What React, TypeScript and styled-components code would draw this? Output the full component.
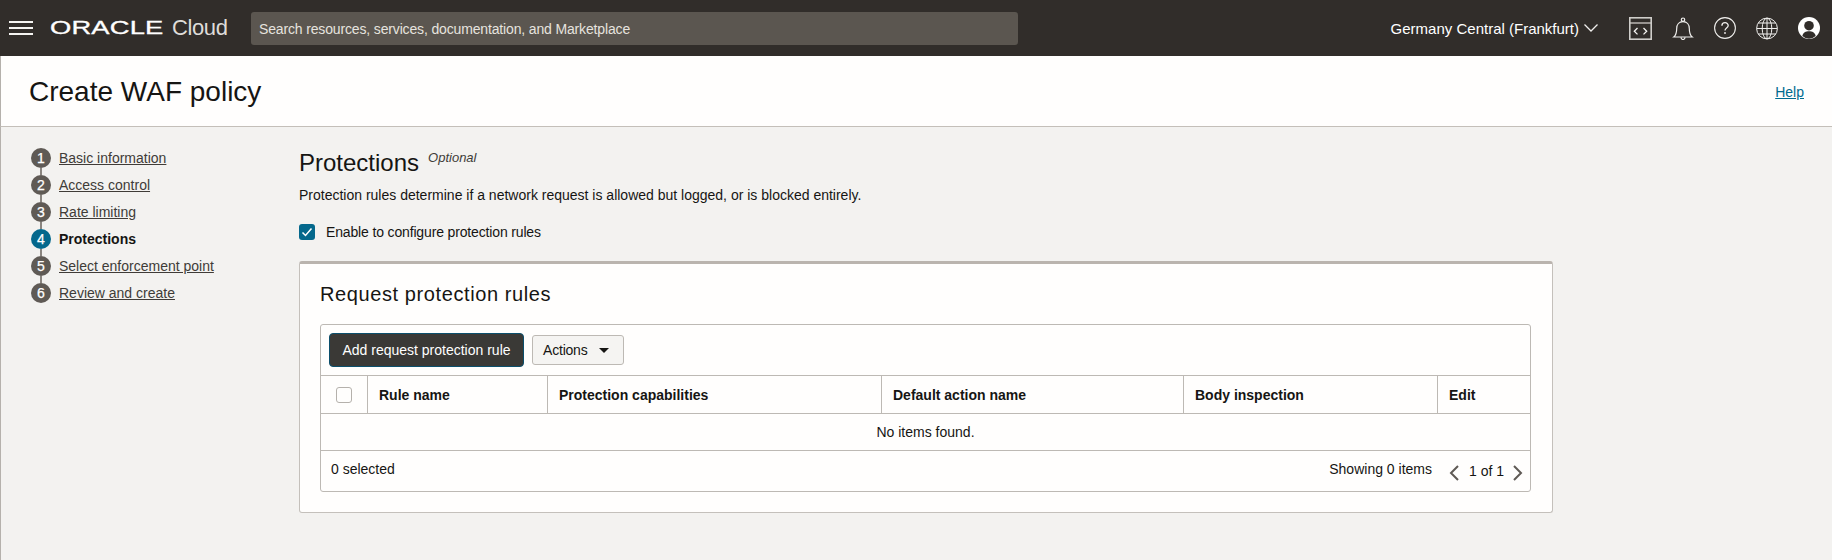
import React from "react";
import styled, { createGlobalStyle } from "styled-components";

const GlobalStyle = createGlobalStyle`
  html, body {
    margin: 0;
    padding: 0;
    background: #f3f2f0;
    font-family: "Liberation Sans", Arial, sans-serif;
    color: #161513;
  }
`;

const Page = styled.div`
  width: 1832px;
  height: 560px;
  overflow: hidden;
  display: flex;
  flex-direction: column;
`;

const TopBar = styled.header`
  height: 56px;
  flex: none;
  background: #312d2a;
  display: flex;
  align-items: center;
  color: #fff;
`;

const Burger = styled.div`
  width: 24px;
  height: 14px;
  flex: none;
  margin-left: 9px;
  display: flex;
  flex-direction: column;
  justify-content: space-between;
  span {
    display: block;
    height: 2px;
    background: #f5f4f2;
  }
`;

const Logo = styled.div`
  display: flex;
  align-items: center;
  width: 201px;
  margin-left: 17px;
  flex: none;
`;

const LogoMark = styled.span`
  font-size: 18px;
  letter-spacing: 0.1px;
  display: inline-block;
  width: 122px;
  transform: scaleX(1.52);
  transform-origin: left center;
  -webkit-text-stroke: 0.3px #fff;
`;

const LogoCloud = styled.span`
  font-size: 22px;
  letter-spacing: -0.4px;
  color: #dedcd9;
`;

const SearchBox = styled.div`
  width: 767px;
  height: 33px;
  box-sizing: border-box;
  margin-top: 1px;
  padding-left: 8px;
  background: #5b5650;
  border-radius: 3px;
  display: flex;
  align-items: center;
  font-size: 14px;
  letter-spacing: -0.15px;
  color: #e6e3df;
`;

const Region = styled.div`
  margin-left: auto;
  display: flex;
  align-items: center;
  font-size: 15px;
  color: #fff;
  gap: 5px;
`;

const IconRow = styled.div`
  margin-left: 31px;
  margin-right: 12px;
  display: flex;
  align-items: center;
  gap: 20px;
`;

const TitleBand = styled.div`
  height: 71px;
  flex: none;
  box-sizing: border-box;
  background: #fffefd;
  border-bottom: 1px solid #c4bfb9;
  border-left: 1px solid #b5b1ac;
  padding: 2px 28px 0;
  display: flex;
  align-items: center;
  justify-content: space-between;
`;

const PageTitle = styled.h1`
  margin: 0;
  font-size: 28px;
  font-weight: 400;
  color: #161513;
`;

const HelpLink = styled.a`
  font-size: 14px;
  color: #006b8f;
  text-decoration: underline;
`;

const Body = styled.div`
  flex: 1;
  display: flex;
  border-left: 1px solid #b5b1ac;
`;

const Steps = styled.ol`
  list-style: none;
  margin: 18px 0 0 0;
  padding: 0 0 0 30px;
  width: 268px;
  flex: none;
`;

const Step = styled.li`
  position: relative;
  height: 27px;
  display: flex;
  align-items: flex-start;
  padding-top: 3px;
  box-sizing: border-box;
  gap: 8px;
  font-size: 14px;
  line-height: 20px;
  &:not(:last-child)::after {
    content: "";
    position: absolute;
    left: 9px;
    top: 23px;
    width: 2px;
    height: 7px;
    background: #8a8580;
  }
`;

const StepDot = styled.span<{ $active?: boolean }>`
  width: 20px;
  height: 20px;
  border-radius: 50%;
  flex: none;
  background: ${(p) => (p.$active ? "#04688c" : "#5f5a55")};
  color: #fff;
  font-size: 14px;
  -webkit-text-stroke: 0.25px #fff;
  display: flex;
  align-items: center;
  justify-content: center;
`;

const StepLabel = styled.span<{ $active?: boolean }>`
  font-weight: ${(p) => (p.$active ? 700 : 400)};
  color: ${(p) => (p.$active ? "#161513" : "#403c38")};
  text-decoration: ${(p) => (p.$active ? "none" : "underline")};
`;

const Main = styled.main`
  width: 1254px;
  flex: none;
  padding-top: 22px;
`;

const SectionHead = styled.div`
  display: flex;
  align-items: flex-start;
  height: 30px;
`;

const SectionTitle = styled.h2`
  margin: 0;
  font-size: 24px;
  line-height: 28px;
  font-weight: 400;
`;

const Optional = styled.em`
  font-size: 13px;
  margin: 1px 0 0 9px;
  line-height: 16px;
  color: #403c38;
`;

const Description = styled.p`
  margin: 7px 0 0;
  font-size: 14px;
  line-height: 18px;
  color: #161513;
`;

const CheckRow = styled.label`
  margin-top: 19px;
  display: flex;
  align-items: center;
  gap: 11px;
  font-size: 14px;
  letter-spacing: -0.15px;
  height: 18px;
`;

const CheckBoxOn = styled.span`
  width: 16px;
  height: 16px;
  border-radius: 3px;
  background: #04688c;
  display: flex;
  align-items: center;
  justify-content: center;
`;

const Card = styled.section`
  margin-top: 20px;
  height: 252px;
  box-sizing: border-box;
  background: #fffefd;
  border: 1px solid #c4c0bb;
  border-top: 3px solid #bab4ae;
  border-radius: 3px;
  padding: 0 21px 0 20px;
`;

const CardTitle = styled.h3`
  margin: 18px 0 0;
  font-size: 20px;
  line-height: 24px;
  font-weight: 400;
  letter-spacing: 0.6px;
`;

const TableFrame = styled.div`
  margin-top: 18px;
  height: 168px;
  box-sizing: border-box;
  border: 1px solid #bdb9b4;
  border-radius: 3px;
  display: flex;
  flex-direction: column;
`;

const Toolbar = styled.div`
  height: 50px;
  flex: none;
  box-sizing: border-box;
  padding-left: 8px;
  display: flex;
  align-items: center;
  gap: 8px;
`;

const PrimaryButton = styled.button`
  width: 195px;
  height: 34px;
  box-sizing: border-box;
  background: #3a3936;
  border: 1.5px solid #0b4f6c;
  border-radius: 4px;
  color: #fff;
  font: 14px "Liberation Sans", Arial, sans-serif;
  padding: 0;
`;

const MenuButton = styled.button`
  width: 92px;
  height: 30px;
  box-sizing: border-box;
  background: #f5f4f2;
  border: 1px solid #bdb9b4;
  border-radius: 3px;
  color: #161513;
  font: 14px "Liberation Sans", Arial, sans-serif;
  letter-spacing: -0.2px;
  padding: 0 0 0 10px;
  display: flex;
  align-items: center;
  gap: 11px;
`;

const Caret = styled.span`
  width: 0;
  height: 0;
  border-left: 5px solid transparent;
  border-right: 5px solid transparent;
  border-top: 5px solid #161513;
`;

const HeadRow = styled.div`
  height: 39px;
  flex: none;
  box-sizing: border-box;
  border-top: 1px solid #bdb9b4;
  border-bottom: 1px solid #bdb9b4;
  display: grid;
  grid-template-columns: 46px 180px 334px 302px 254px 1fr;
`;

const HeadCell = styled.div`
  display: flex;
  align-items: center;
  padding-left: 11px;
  font-size: 14px;
  font-weight: 700;
  color: #161513;
  border-left: 1px solid #bdb9b4;
  &:first-child {
    border-left: 0;
    padding-left: 15px;
  }
`;

const CheckBoxOff = styled.span`
  width: 16px;
  height: 16px;
  box-sizing: border-box;
  border: 1px solid #b5b1ac;
  border-radius: 3px;
  background: #fffefd;
`;

const EmptyRow = styled.div`
  height: 37px;
  flex: none;
  box-sizing: border-box;
  border-bottom: 1px solid #bdb9b4;
  display: flex;
  align-items: center;
  justify-content: center;
  font-size: 14px;
`;

const Footer = styled.div`
  flex: 1;
  display: flex;
  align-items: flex-start;
  justify-content: space-between;
  padding: 10px 7px 0 10px;
  font-size: 14px;
  line-height: 16px;
`;

const Pager = styled.div`
  display: flex;
  align-items: flex-start;
`;

const PagerText = styled.span`
  margin-right: 17px;
`;

const PageCount = styled.span`
  margin: 2px 9px 0 10px;
`;

const ChevronBox = styled.svg`
  flex: none;
  margin-top: 4px;
`;

const Hamburger = () => (
  <Burger>
    <span />
    <span />
    <span />
  </Burger>
);

const CodeIcon = () => (
  <svg width="23" height="23" viewBox="0 0 23 23" fill="none" stroke="#cfcdca">
    <rect x="0.8" y="0.8" width="21.4" height="21.4" strokeWidth="1.6" />
    <path d="M1 6h21" strokeWidth="1.3" />
    <path d="M8.5 11l-3.2 3.2 3.2 3.2M14.5 11l3.2 3.2-3.2 3.2" stroke="#f5f4f2" strokeWidth="1.3" />
  </svg>
);

const BellIcon = () => (
  <svg width="22" height="23" viewBox="-1 0 22 23" fill="none" stroke="#f0efed" strokeWidth="1.2">
    <path d="M.8 20c2.4-1.900 2.900-4.500 2.900-8.400 0-3.900 2.400-6.900 6.300-6.900s6.300 3 6.300 6.900c0 3.900.5 6.500 2.900 8.400z" />
    <circle cx="10" cy="2.7" r="1.7" />
    <path d="M8 20.300c0 2.900 4 2.900 4 0" />
  </svg>
);

const HelpIcon = () => (
  <svg width="22" height="22" viewBox="0 0 22 22" fill="none" stroke="#f0efed" strokeWidth="1.1">
    <circle cx="11" cy="11" r="10.400" />
    <path d="M7.900 8.700c0-4 6.300-4 6.300-.1 0 2.400-3.200 2.500-3.200 4.800" strokeWidth="1.3" />
    <circle cx="11" cy="16" r=".9" fill="#f0efed" stroke="none" />
  </svg>
);

const GlobeIcon = () => (
  <svg width="22" height="23" viewBox="0 0 22 23" fill="none" stroke="#f0efed" strokeWidth="1">
    <circle cx="11" cy="11.500" r="10.400" />
    <ellipse cx="11" cy="11.500" rx="4.800" ry="10.400" />
    <path d="M11 1v21M.8 11.500h20.400M2.300 6h17.400M2.300 17h17.400" />
  </svg>
);

const AvatarIcon = () => (
  <svg width="22" height="22" viewBox="0 0 22 22">
    <circle cx="11" cy="11" r="11" fill="#fff" />
    <circle cx="11" cy="8.700" r="4.800" fill="#312d2a" />
    <path d="M4.300 19c.8-3.400 3.400-4.700 6.700-4.700s5.900 1.300 6.700 4.700A10.800 10.800 0 0 1 11 21.800 10.800 10.800 0 0 1 4.300 19z" fill="#312d2a" />
  </svg>
);

const RegionChevron = () => (
  <svg width="14" height="8" viewBox="0 0 14 8" fill="none" stroke="#f0efed" strokeWidth="1.3">
    <path d="M.5.5L7 7l6.500-6.500" />
  </svg>
);

const PagerChevron = ({ dir }: { dir: "left" | "right" }) => (
  <ChevronBox width="10" height="16" viewBox="0 0 10 16" fill="none" stroke="#5f5a55" strokeWidth="2">
    <path d={dir === "left" ? "M9 1L2 8l7 7" : "M1 1l7 7-7 7"} />
  </ChevronBox>
);

const steps = [
  "Basic information",
  "Access control",
  "Rate limiting",
  "Protections",
  "Select enforcement point",
  "Review and create",
];

const columns = ["Rule name", "Protection capabilities", "Default action name", "Body inspection", "Edit"];

export default function App() {
  return (
    <Page>
      <GlobalStyle />
      <TopBar>
        <Hamburger />
        <Logo>
          <LogoMark>ORACLE</LogoMark>
          <LogoCloud>Cloud</LogoCloud>
        </Logo>
        <SearchBox>Search resources, services, documentation, and Marketplace</SearchBox>
        <Region>
          Germany Central (Frankfurt)
          <RegionChevron />
        </Region>
        <IconRow>
          <CodeIcon />
          <BellIcon />
          <HelpIcon />
          <GlobeIcon />
          <AvatarIcon />
        </IconRow>
      </TopBar>
      <TitleBand>
        <PageTitle>Create WAF policy</PageTitle>
        <HelpLink>Help</HelpLink>
      </TitleBand>
      <Body>
        <Steps>
          {steps.map((label, i) => (
            <Step key={label}>
              <StepDot $active={i === 3}>{i + 1}</StepDot>
              <StepLabel $active={i === 3}>{label}</StepLabel>
            </Step>
          ))}
        </Steps>
        <Main>
          <SectionHead>
            <SectionTitle>Protections</SectionTitle>
            <Optional>Optional</Optional>
          </SectionHead>
          <Description>Protection rules determine if a network request is allowed but logged, or is blocked entirely.</Description>
          <CheckRow>
            <CheckBoxOn>
              <svg width="12" height="12" viewBox="0 0 12 12" fill="none" stroke="#fff" strokeWidth="1.5">
                <path d="M1.500 6.500l3 3 6-7" />
              </svg>
            </CheckBoxOn>
            Enable to configure protection rules
          </CheckRow>
          <Card>
            <CardTitle>Request protection rules</CardTitle>
            <TableFrame>
              <Toolbar>
                <PrimaryButton>Add request protection rule</PrimaryButton>
                <MenuButton>
                  Actions
                  <Caret />
                </MenuButton>
              </Toolbar>
              <HeadRow>
                <HeadCell>
                  <CheckBoxOff />
                </HeadCell>
                {columns.map((c) => (
                  <HeadCell key={c}>{c}</HeadCell>
                ))}
              </HeadRow>
              <EmptyRow>No items found.</EmptyRow>
              <Footer>
                <span>0 selected</span>
                <Pager>
                  <PagerText>Showing 0 items</PagerText>
                  <PagerChevron dir="left" />
                  <PageCount>1 of 1</PageCount>
                  <PagerChevron dir="right" />
                </Pager>
              </Footer>
            </TableFrame>
          </Card>
        </Main>
      </Body>
    </Page>
  );
}
